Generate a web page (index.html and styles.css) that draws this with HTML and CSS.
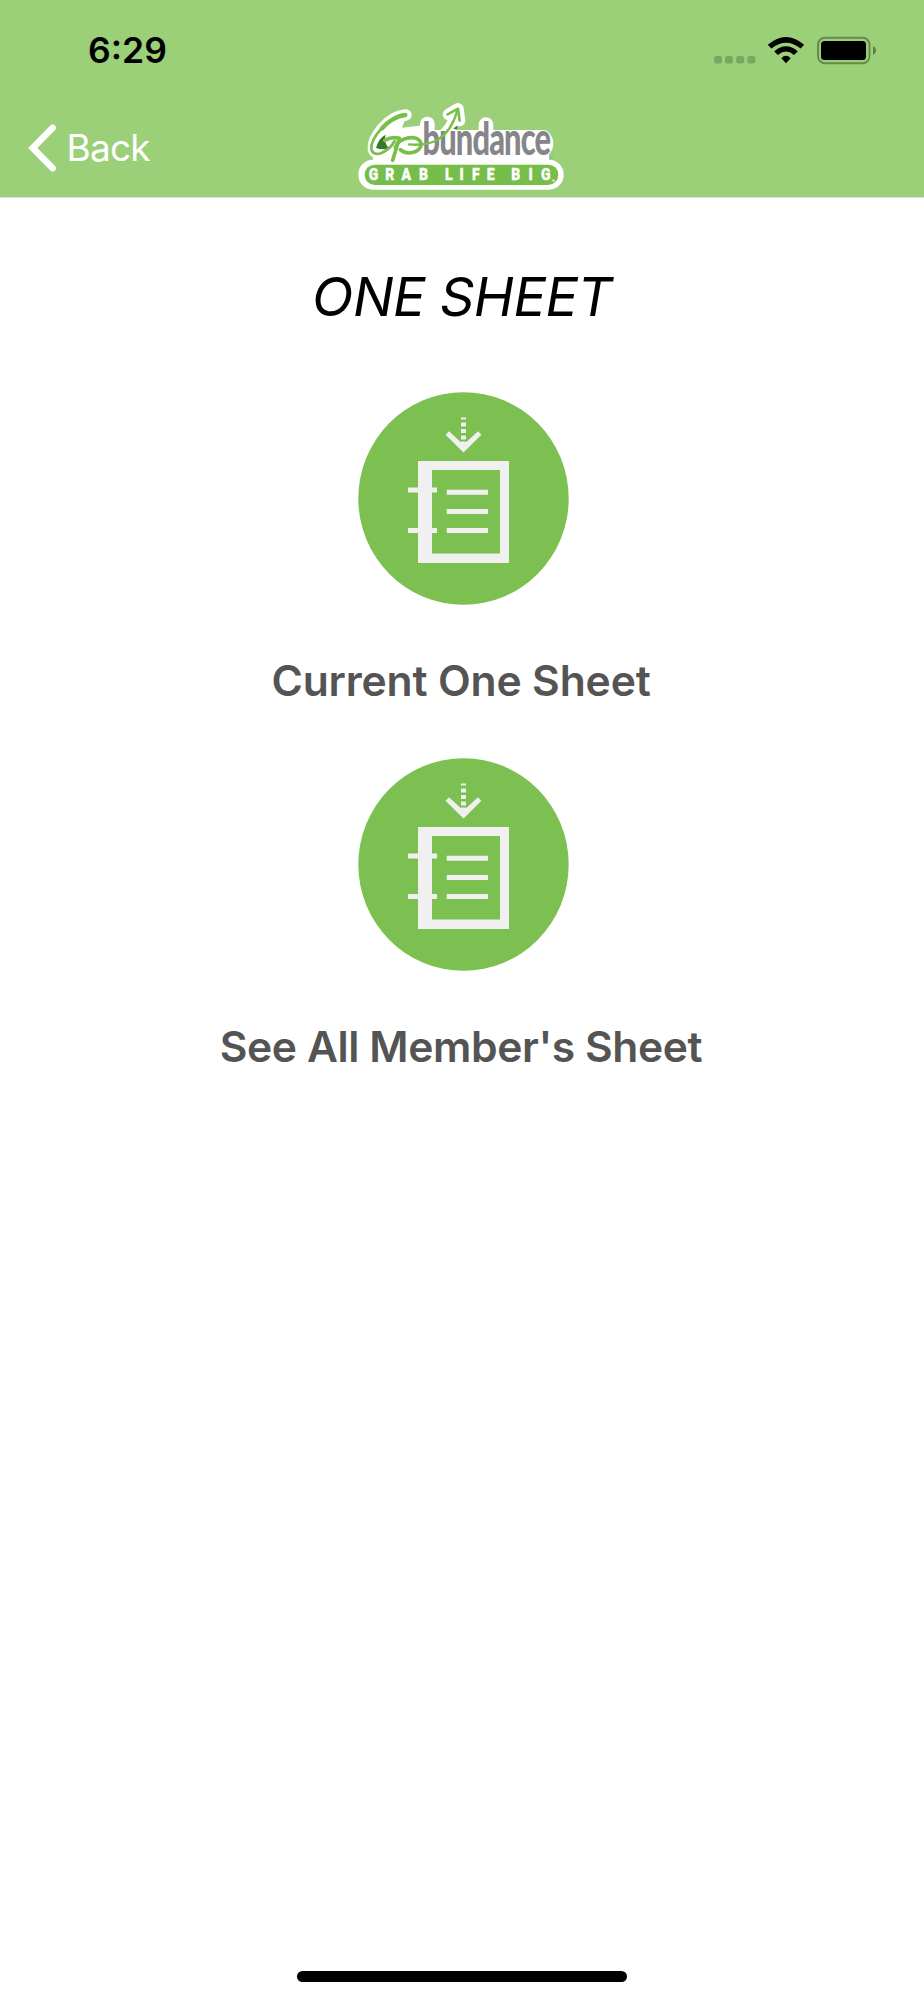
FILE: index.html
```html
<!DOCTYPE html>
<html lang="en">
<head>
<meta charset="utf-8">
<title>One Sheet</title>
<link rel="stylesheet" href="styles.css">
</head>
<body>
<div class="screen">
  <header class="header">
    <div class="status">
      <span class="time">6:29</span>
      <svg class="indicators" width="164" height="30" viewBox="0 0 164 30">
        <g fill="#7ba660"><rect x="0" y="20" width="8" height="7.500" rx="2.300"/><rect x="11" y="20" width="8" height="7.500" rx="2.300"/><rect x="22.200" y="20" width="8" height="7.500" rx="2.300"/><rect x="33.400" y="20" width="8" height="7.500" rx="2.300"/></g>
        <path d="M53.800 8.800Q72 -6.800 90.200 8.800L86.600 12.600Q72 .8 57.400 12.600ZM60.200 15.400Q72 5.200 83.800 15.400L80 19Q72 12.200 64 19ZM67.300 22.300Q72 17.400 76.700 22.300L72 27.200Z"/>
        <rect x="104" y="1.700" width="51.500" height="25.600" rx="7" fill="none" stroke="#648a4c" stroke-width="1.900"/>
        <rect x="107" y="5" width="45" height="19" rx="3.500"/>
        <path d="M159 10.200Q162 11.500 162 14.500T159 18.800Z" fill="#5c7f47"/>
      </svg>
    </div>
    <nav class="nav">
      <a class="back">
        <svg width="28" height="48" viewBox="0 0 28 48"><path d="M24.700 3.800L4.800 24L24.700 44.200" fill="none" stroke="#fff" stroke-width="6.600" stroke-linecap="round" stroke-linejoin="miter"/></svg>
        <span class="back-label">Back</span>
      </a>
      <svg class="logo" width="206" height="89" viewBox="54 33 618 267">
        <g class="logo-halo">
          <path d="M198 75C145 77 96 145 100 178C105 200 145 185 165 158M178 150L158 208M170 178C180 140 240 135 244 165C244 190 200 195 178 180C260 165 325 160 352 62M325 73L354 56L359 92" stroke-width="34"/>
          <path d="M262 102V180M438 104V180M280 142H610Q626 160 610 180H280Z" stroke-width="44"/>
          <path d="M196 75Q130 90 103 165V215H250V110L180 118Z" stroke-width="8"/>
          <path d="M110 165H625V225H110Z" stroke-width="4"/>
          <rect x="55" y="209" width="616" height="90" rx="44" stroke="none"/>
        </g>
        <rect x="74" y="224" width="581" height="61" rx="30" fill="#76bd49"/>
        <path d="M108 174Q116 144 137 134Q129 158 149 176Q126 181 108 174Z" fill="#39782a"/>
        <path d="M340 117Q345 109 352 107L351 117Z" fill="#39782a"/>
        <text class="logo-word" transform="scale(.68 1)" x="364" y="196" textLength="567">bundance</text>
        <g fill="none" stroke="#76bf48" stroke-linecap="round" stroke-linejoin="round">
          <path d="M196 73C145 79 91 144 94 178C101 206 145 187 164 153" stroke-width="8"/>
          <path d="M196 75C172 77 143 94 126 115" stroke-width="13"/>
          <path d="M134 151Q156 139 178 145L158 211" stroke-width="11"/>
          <path d="M166 172C177 140 235 132 243 160C246 187 201 198 181 179" stroke-width="11"/>
          <path d="M207 163C275 170 327 148 352 62" stroke-width="7"/>
          <path d="M323 73L354 56L359 92" stroke-width="8"/>
        </g>
        <g class="logo-tag" transform="scale(.84 1)">
          <text x="103 162 220 282" y="271">GRAB</text>
          <text x="375 427 471 524" y="271">LIFE</text>
          <text x="612 673 718" y="271">BIG</text>
        </g>
        <text class="logo-mark" x="629" y="211" fill="#999">®</text>
        <text class="logo-mark" x="635" y="278" fill="#fff">®</text>
      </svg>
    </nav>
  </header>
  <main class="content">
    <h1 class="title">ONE SHEET</h1>
    <section class="option">
      <svg class="badge" width="211" height="213" viewBox="0 0 211 213">
        <ellipse cx="105.500" cy="106.500" rx="105.200" ry="106.300" fill="#7bc050"/>
        <g fill="#f0f0f0">
          <path d="M103 25.500h5v2h-5zM103 30.500h5v4h-5zM103 37h5v4h-5zM103 43.500h5v4h-5z"/>
          <path d="M91 39.300L103 50.300V49.500H108V50.300L120 39.300L123.400 42.700L105.500 60.500L87.500 42.700Z"/>
          <path fill-rule="evenodd" d="M60 69h91v102H60zM74 78v83.500h68V78z"/>
          <path d="M50 95.500h29v5H50zM50 136h29v5H50zM88.700 97.700H130v5H88.700zM88.700 117H130v5H88.700zM88.700 136H130v5H88.700z"/>
        </g>
      </svg>
      <span class="label label-current">Current One Sheet</span>
    </section>
    <section class="option">
      <svg class="badge" width="211" height="213" viewBox="0 0 211 213">
        <ellipse cx="105.500" cy="106.500" rx="105.200" ry="106.300" fill="#7bc050"/>
        <g fill="#f0f0f0">
          <path d="M103 25.500h5v2h-5zM103 30.500h5v4h-5zM103 37h5v4h-5zM103 43.500h5v4h-5z"/>
          <path d="M91 39.300L103 50.300V49.500H108V50.300L120 39.300L123.400 42.700L105.500 60.500L87.500 42.700Z"/>
          <path fill-rule="evenodd" d="M60 69h91v102H60zM74 78v83.500h68V78z"/>
          <path d="M50 95.500h29v5H50zM50 136h29v5H50zM88.700 97.700H130v5H88.700zM88.700 117H130v5H88.700zM88.700 136H130v5H88.700z"/>
        </g>
      </svg>
      <span class="label label-all">See All Member's Sheet</span>
    </section>
  </main>
  <div class="home-indicator"></div>
</div>
</body>
</html>
```

FILE: styles.css
```css
* { box-sizing: border-box; }
body { margin: 0; background: #fff; font-family: Inter, "Liberation Sans", sans-serif; }
.screen { display: flex; flex-direction: column; width: 924px; height: 2000px; overflow: hidden; }
.header { height: 198px; background: #9bd079; border-bottom: 1px solid #dededf; }
.status { display: flex; justify-content: space-between; height: 101px; padding: 0 46px 0 88px; }
.time { margin-top: 30px; height: 41px; line-height: 41px; font-size: 35.500px; font-weight: 600; }
.indicators { margin-top: 36px; }
.nav { display: grid; grid-template-columns: 330px 206px; align-items: start; padding-left: 28px; height: 96px; }
.back { display: flex; align-items: center; gap: 10.500px; height: 48px; margin-top: 23px; color: #fff; }
.back-label { font-size: 37px; font-weight: 400; line-height: 48px; letter-spacing: -0.8px; }
.logo { display: block; overflow: visible; }
.logo-halo { fill: #fff; stroke: #fff; stroke-linecap: round; stroke-linejoin: round; }
.logo-halo path:first-child { fill: none; }
.logo-word { font-family: Lato, sans-serif; font-size: 136px; font-weight: 900; fill: #85868a; }
.logo-tag { font-family: Roboto, sans-serif; font-size: 50px; font-weight: 900; fill: #fff; stroke: #fff; stroke-width: 1px; }
.logo-mark { font-size: 15px; }
.content { flex: 1; display: flex; flex-direction: column; align-items: center; padding-top: 66px; }
.title { margin: 0 0 62px; height: 66px; line-height: 66px; font-size: 54px; font-weight: 400; font-style: italic; letter-spacing: -0.5px; }
.option { display: flex; flex-direction: column; align-items: center; width: 924px; height: 366px; }
.badge { margin-left: 3px; }
.label { margin-top: 50px; margin-right: 2px; height: 52px; line-height: 52px; font-size: 42.600px; font-weight: 600; color: #545454; white-space: nowrap; }
.label-current { letter-spacing: -0.15px; }
.label-all { letter-spacing: -0.4px; }
.home-indicator { width: 330px; height: 11px; margin: 0 auto 18px; border-radius: 6px; background: #000; }
```
